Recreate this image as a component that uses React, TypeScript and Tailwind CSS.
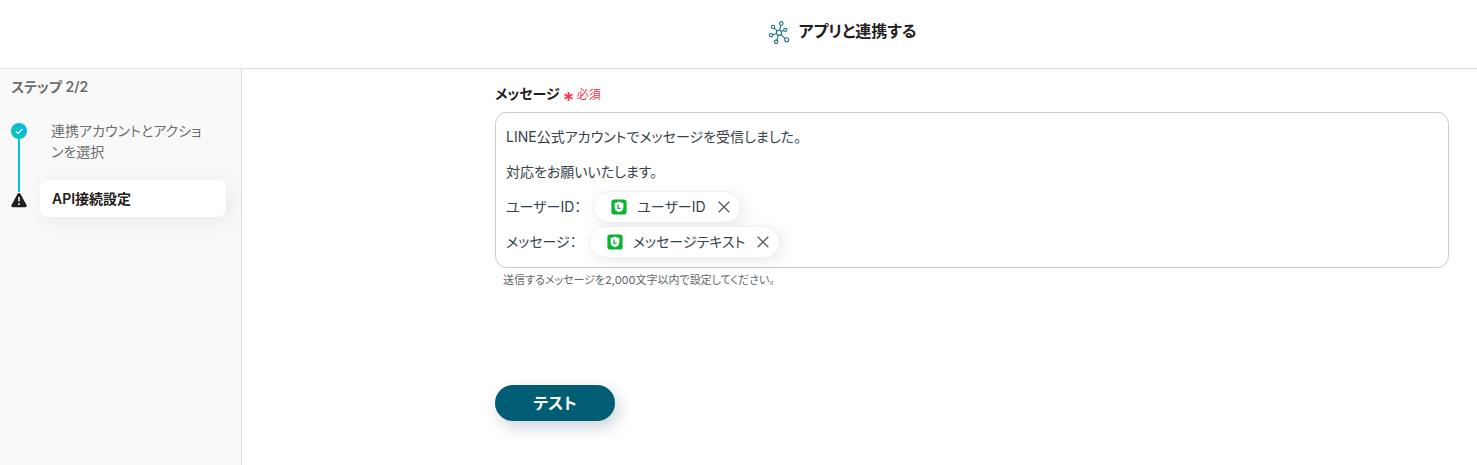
import { ReactElement, ReactNode } from "react";

type TokenProps = {
	label: string;
};

type LineProps = {
	children: ReactNode;
};

const AppsIcon = (): ReactElement => (
	<svg className="size-6" viewBox="0 0 24 24" fill="none" stroke="#1b7086" strokeWidth="1.1" aria-hidden="true">
		<circle cx="12" cy="12.8" r="2.6" />
		<circle cx="14.3" cy="3.4" r="1.8" />
		<circle cx="6" cy="7" r="1.7" />
		<circle cx="18.3" cy="9.8" r="1.6" />
		<circle cx="4" cy="15.2" r="1.7" />
		<circle cx="9.1" cy="21.8" r="1.7" />
		<circle cx="19.7" cy="19.8" r="2" />
		<path d="M13.9 5.2 12.7 10.2M7.3 8.2l2.9 2.7M16.8 10.5l-2.4 1.1M5.6 14.7l4-1.2M9.8 20.2l1.4-4.9M18.2 18.3 13.9 14.6" />
	</svg>
);

const CheckIcon = (): ReactElement => (
	<svg className="size-4 shrink-0" viewBox="0 0 16 16" fill="none" aria-hidden="true">
		<defs>
			<linearGradient id="step-done" x1="0" y1="0.7" x2="1" y2="0.3">
				<stop stopColor="#05c8b4" />
				<stop offset="1" stopColor="#06b3ea" />
			</linearGradient>
		</defs>
		<circle cx="8" cy="8" r="8" fill="url(#step-done)" />
		<path d="m4.8 8.2 2.3 2.2 4.4-4.6" stroke="#fff" strokeWidth="1.2" />
	</svg>
);

const WarningIcon = (): ReactElement => (
	<svg className="size-4 shrink-0" viewBox="0 0 16 16" aria-hidden="true">
		<path d="M6.6 1.8Q8 .4 9.4 1.8L15.5 13q.8 2-1.2 2.2H1.7Q-.3 15 .5 13Z" fill="#1f2020" />
		<path d="M8 5v4.6M8 11.2v1.8" stroke="#fff" strokeWidth="1.5" />
	</svg>
);

const LineLogo = (): ReactElement => (
	<svg className="size-4 shrink-0" viewBox="0 0 16 16" aria-hidden="true">
		<rect x="0.4" y="0.4" width="15.2" height="15.2" rx="2.8" fill="#07b52f" />
		<path d="M8 2.6Q10 3.9 12.4 3.9v4.4c0 2.6-2 4.1-4.4 4.9-2.4-.8-4.4-2.3-4.4-4.9V3.9Q6 3.9 8 2.6Z" fill="#fff" />
		<path d="M7.1 5.4v4h2.6" fill="none" stroke="#07b52f" strokeWidth="1.3" />
	</svg>
);

const Token = ({ label }: TokenProps): ReactElement => {
	return (
		<span
			contentEditable={false}
			className="ml-3 inline-flex h-8 items-center rounded-full border border-[#f0f0f0] bg-white pr-2 pl-[17px] shadow-[4px_4px_16px_rgba(0,0,0,0.08)]"
		>
			<LineLogo />
			<span className="ml-[10px]">{label}</span>
			<button type="button" aria-label={`${label}を削除`} className="ml-[10px] size-4">
				<svg className="size-4" viewBox="0 0 16 16" fill="none" stroke="#5c6063" strokeWidth="1.4" aria-hidden="true">
					<path d="m2.7 2.7 10.6 10.6M13.3 2.7 2.7 13.3" />
				</svg>
			</button>
		</span>
	);
};

const Line = ({ children }: LineProps): ReactElement => (
	<div className="flex h-[35px] items-center">{children}</div>
);

const App = (): ReactElement => {
	return (
		<div className="flex min-h-screen flex-col bg-white font-[Inter,'Noto_Sans_CJK_JP',sans-serif] text-[14px] text-[#36424b] [font-feature-settings:'palt']">
			<header className="flex h-[69px] items-start justify-center gap-2 border-b border-[#dedede] pt-5 pl-[206px]">
				<AppsIcon />
				<h1 className="text-base leading-[22px] font-semibold text-[#1f2020]">アプリと連携する</h1>
			</header>

			<div className="flex flex-1">
				<aside className="w-[242px] shrink-0 border-r border-[#dedede] bg-[#f9f9f9] pt-2 pr-[15px] pl-[11px]">
					<p className="leading-5 font-semibold text-[#6e6e6e]">ステップ 2/2</p>
					<ol className="mt-[23px]">
						<li className="flex gap-6">
							<div className="flex flex-col items-center pt-[3px]">
								<CheckIcon />
								<span className="w-[2px] flex-1 bg-[#05c4cf]" />
							</div>
							<a href="#account" className="pr-4 pb-[18px] leading-[21px] text-[#6e6e6e]">
								連携アカウントとアクションを選択
							</a>
						</li>
						<li className="flex gap-[13px]">
							<div className="flex flex-col items-center">
								<span className="h-3 w-[2px] bg-[#05c4cf]" />
								<WarningIcon />
							</div>
							<a
								href="#api"
								aria-current="step"
								className="flex h-[37px] flex-1 items-center rounded-lg bg-white px-3 font-semibold text-[#1f2020] shadow-[4px_4px_20px_rgba(0,0,0,0.07)]"
							>
								API接続設定
							</a>
						</li>
					</ol>
				</aside>

				<main className="flex-1 pt-[14px] pr-7 pl-[253px]">
					<div className="flex items-center gap-1 leading-5">
						<span id="message-label" className="font-semibold text-[#1f2020]">メッセージ</span>
						<span className="flex items-center gap-1 pt-[2px] text-[12px] text-[#f9354c]">
							<svg className="mt-[2px] size-[9px]" viewBox="0 0 9 9" stroke="#f9354c" strokeWidth="1.7" aria-hidden="true">
								<path d="M4.5 0v9M.6 2.2l7.8 4.6M8.4 2.2.6 6.8" />
							</svg>
							必須
						</span>
					</div>
					<div
						role="textbox"
						aria-multiline="true"
						aria-labelledby="message-label"
						aria-describedby="message-help"
						contentEditable
						suppressContentEditableWarning
						className="mt-[7px] rounded-xl border border-[#c3ccd3] px-[10px] pt-[6px] pb-2 outline-none"
					>
						<Line>LINE公式アカウントでメッセージを受信しました。</Line>
						<Line>対応をお願いいたします。</Line>
						<Line>
							<span>ユーザーID：</span>
							<Token label="ユーザーID" />
						</Line>
						<Line>
							<span>メッセージ：</span>
							<Token label="メッセージテキスト" />
						</Line>
					</div>
					<p id="message-help" className="mt-1 px-2 text-[11px] leading-4 text-[#5d6870]">
						送信するメッセージを2,000文字以内で設定してください。
					</p>
					<button
						type="button"
						className="mt-[97px] h-9 w-[120px] rounded-full bg-[#005d73] text-base font-semibold text-white shadow-[4px_6px_16px_rgba(0,40,60,0.2)]"
					>
						テスト
					</button>
				</main>
			</div>
		</div>
	);
};

export default App;
